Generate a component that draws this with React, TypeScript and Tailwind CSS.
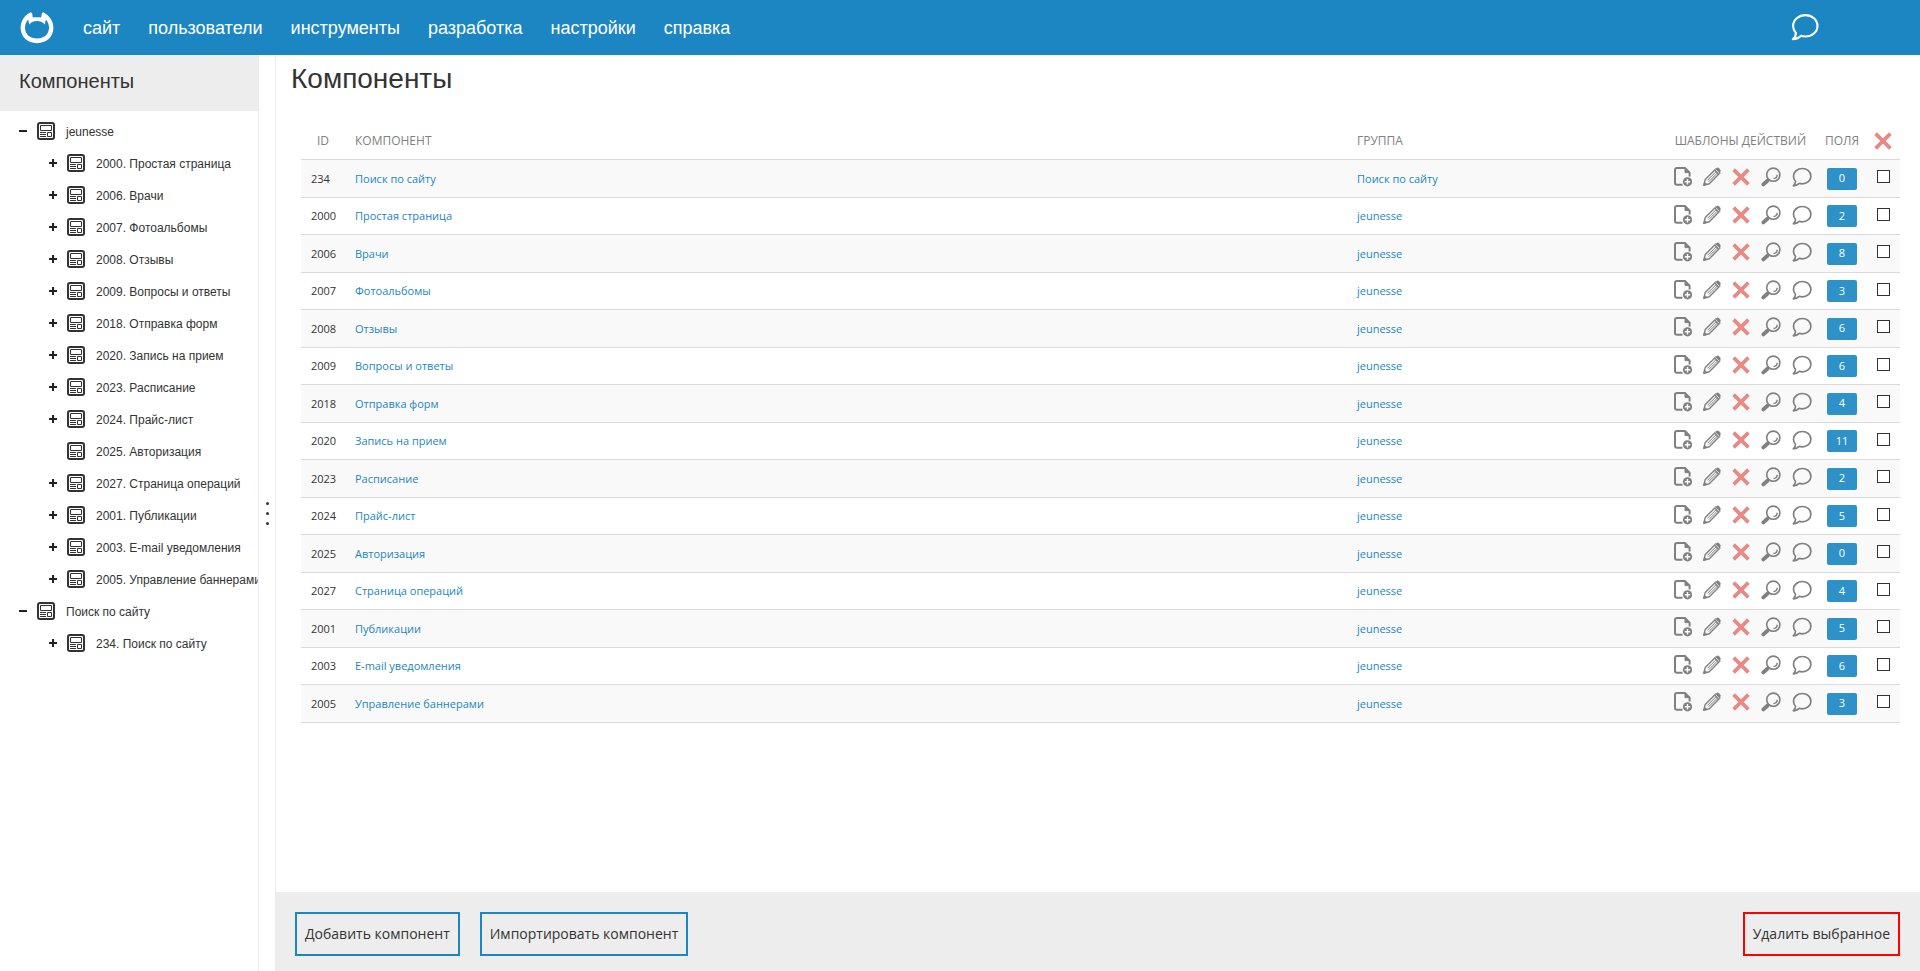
import React, { useState } from "react";

type TreeNode = { label: string; children?: TreeNode[]; leaf?: boolean };

type Component = { id: number; name: string; group: string; fields: number };

const components: Component[] = [
  { id: 234, name: "Поиск по сайту", group: "Поиск по сайту", fields: 0 },
  { id: 2000, name: "Простая страница", group: "jeunesse", fields: 2 },
  { id: 2006, name: "Врачи", group: "jeunesse", fields: 8 },
  { id: 2007, name: "Фотоальбомы", group: "jeunesse", fields: 3 },
  { id: 2008, name: "Отзывы", group: "jeunesse", fields: 6 },
  { id: 2009, name: "Вопросы и ответы", group: "jeunesse", fields: 6 },
  { id: 2018, name: "Отправка форм", group: "jeunesse", fields: 4 },
  { id: 2020, name: "Запись на прием", group: "jeunesse", fields: 11 },
  { id: 2023, name: "Расписание", group: "jeunesse", fields: 2 },
  { id: 2024, name: "Прайс-лист", group: "jeunesse", fields: 5 },
  { id: 2025, name: "Авторизация", group: "jeunesse", fields: 0 },
  { id: 2027, name: "Страница операций", group: "jeunesse", fields: 4 },
  { id: 2001, name: "Публикации", group: "jeunesse", fields: 5 },
  { id: 2003, name: "E-mail уведомления", group: "jeunesse", fields: 6 },
  { id: 2005, name: "Управление баннерами", group: "jeunesse", fields: 3 },
];

const toNode = (c: Component): TreeNode => ({
  label: `${c.id}. ${c.name}`,
  leaf: c.id === 2025,
});

const tree: TreeNode[] = ["jeunesse", "Поиск по сайту"].map((group) => ({
  label: group,
  children: components.filter((c) => c.group === group).map(toNode),
}));

const menu = ["сайт", "пользователи", "инструменты", "разработка", "настройки", "справка"];

function Logo() {
  return (
    <svg viewBox="0 0 34 32" className="h-8 w-[34px]" fill="#fff">
      <path
        fillRule="evenodd"
        d="M10.200 .5Q11.800 0 12.200 1.800L12.800 5.600C15.400 5 18.600 5 21.200 5.600L21.800 1.800Q22.200 0 23.800 .5C28.800 3.200 33.400 8.800 33.400 15.800C33.400 25 26.200 31.200 17 31.200C7.800 31.200 .6 25 .6 15.800C.6 8.600 5.200 2.800 10.200 .5ZM17 9C13.900 9 11.600 9.800 9.200 12.600L8.200 7.600C6.200 10 5 12.500 5 15.800C5 22.400 10 26.600 17 26.600C24 26.600 29 22.400 29 15.800C29 12.500 27.800 10 25.800 7.600L24.800 12.600C22.400 9.800 20.100 9 17 9Z"
      />
    </svg>
  );
}

function BubbleIcon({ className }: { className: string }) {
  return (
    <svg viewBox="0 0 20 20" className={className} fill="none" stroke="currentColor" strokeLinejoin="round">
      <path d="M10.300 1.500C15 1.500 18.900 4.900 18.900 9.200C18.900 13.500 15 16.800 10.300 16.800C9.200 16.800 8.200 16.700 7.300 16.300C5.700 17.900 3.600 18.700 1.300 18.800C2.700 17.700 3.500 16.300 3.500 14.300C2.200 12.900 1.500 11.200 1.500 9.200C1.500 4.900 5.500 1.500 10.300 1.500Z" />
    </svg>
  );
}

function NodeIcon() {
  return (
    <svg viewBox="0 0 18 18" className="h-[18px] w-[18px] shrink-0" fill="none" stroke="#333">
      <rect x="1" y="1" width="16" height="16" rx="2" strokeWidth="2" />
      <path d="M3.500 3.500H14.500V8.500H3.500ZM10.500 10.500H14.500V14.500H10.500ZM3 10.500H9M3 12.500H9M3 14.500H9" />
    </svg>
  );
}

function PageAddIcon() {
  return (
    <svg viewBox="0 0 18 20" className="h-5 w-[18px]" fill="none" stroke="#808080">
      <path d="M8.500 17.800H3Q1 17.800 1 15.800V3Q1 1 3 1H11L15.600 5.600V9.500" strokeWidth="2" />
      <path d="M11 1V5.600H15.600Z" fill="#808080" />
      <circle cx="13.500" cy="14.800" r="4.600" fill="#808080" stroke="none" />
      <path d="M10.800 14.800H16.200M13.500 12.100V17.500" stroke="#fff" strokeWidth="1.400" />
    </svg>
  );
}

function PencilIcon() {
  return (
    <svg viewBox="0 0 18 20" className="h-5 w-[18px]" fill="none" stroke="#808080" strokeLinejoin="round">
      <path d="M.8 18.200L2.200 12.600L12.800 2L16.900 6.100L6.300 16.700Z" strokeWidth="1.400" />
      <path d="M4.500 13.300L13 4.800M5.800 14.600L14.300 6.100" strokeWidth="1" />
      <path d="M11.300 3.500L14 .8Q15 .2 16 1.200L17.500 2.900Q18 4 17.300 4.800L14.800 7.500Z" fill="#808080" stroke="none" />
      <path d="M12.500 2.500L16.300 6.300" stroke="#f4f4f4" strokeWidth=".8" />
      <path d="M.8 18.200L1.600 15.200L3.800 17.400Z" fill="#808080" />
    </svg>
  );
}

function CrossIcon() {
  return (
    <svg viewBox="0 0 18 18" className="h-[18px] w-[18px]" stroke="#e68a83" strokeWidth="3.700">
      <path d="M1.600 1.600L16.400 16.400M16.400 1.600L1.600 16.400" />
    </svg>
  );
}

function SearchIcon() {
  return (
    <svg viewBox="0 0 20 20" className="h-5 w-5" fill="none" stroke="#808080">
      <circle cx="12.300" cy="7.700" r="6.600" strokeWidth="1.600" />
      <path d="M12.500 11.600Q16 11.200 16.300 7.700" strokeWidth="1.500" />
      <path d="M7.800 12.200L6 13.800" strokeWidth="1.800" />
      <path d="M6.400 13.800L2.400 17.400" strokeWidth="3.900" strokeLinecap="round" />
    </svg>
  );
}

function Toggle({ open, onClick, label }: { open: boolean; onClick?: () => void; label: string }) {
  return (
    <button type="button" aria-label={label} aria-expanded={open} onClick={onClick} className="h-2 w-2 shrink-0">
      <svg viewBox="0 0 8 8" className="h-2 w-2" stroke="#222" strokeWidth="2">
        <path d={open ? "M0 4H8" : "M0 4H8M4 0V8"} />
      </svg>
    </button>
  );
}

function Branch({ node }: { node: TreeNode }) {
  const [open, setOpen] = useState(true);
  return (
    <li>
      <div className="flex h-8 items-center gap-[10px] pl-[19px]">
        <Toggle open={open} onClick={() => setOpen(!open)} label={node.label} />
        <NodeIcon />
        <a href="#" className="pt-px pl-px">{node.label}</a>
      </div>
      {open && (
        <ul>
          {node.children?.map((child) => (
            <li key={child.label} className="flex h-8 items-center gap-[10px] pl-[49px]">
              {child.leaf ? <span className="w-2 shrink-0" /> : <Toggle open={false} label={child.label} />}
              <NodeIcon />
              <a href="#" className="pt-px pl-px">{child.label}</a>
            </li>
          ))}
        </ul>
      )}
    </li>
  );
}

function Actions() {
  return (
    <div className="flex items-center justify-between pb-[2px] text-[#808080]">
      <button type="button" aria-label="Добавить"><PageAddIcon /></button>
      <button type="button" aria-label="Изменить"><PencilIcon /></button>
      <button type="button" aria-label="Удалить"><CrossIcon /></button>
      <button type="button" aria-label="Поиск"><SearchIcon /></button>
      <button type="button" aria-label="Подписка"><BubbleIcon className="h-5 w-5 stroke-[1.7]" /></button>
    </div>
  );
}

export default function App() {
  return (
    <div className="flex h-screen flex-col bg-white font-['Liberation_Sans',sans-serif] text-[#333]">
      <header className="flex h-[55px] shrink-0 items-center bg-[#1c86c2] pr-[101px] pl-5 text-white">
        <a href="#" aria-label="Главная"><Logo /></a>
        <nav className="ml-[15px] flex text-lg">
          {menu.map((item) => (
            <a key={item} href="#" className="px-[14px]">{item}</a>
          ))}
        </nav>
        <button type="button" aria-label="Сообщения" className="ml-auto pb-[2px]">
          <BubbleIcon className="h-7 w-7 stroke-[1.5]" />
        </button>
      </header>

      <div className="flex min-h-0 flex-1">
        <aside className="w-[259px] shrink-0 overflow-hidden border-r border-[#ededed]">
          <h2 className="flex h-14 items-center bg-[#ededed] pb-1 pl-[19px] text-xl">Компоненты</h2>
          <ul className="pt-1 text-xs whitespace-nowrap">
            {tree.map((node) => <Branch key={node.label} node={node} />)}
          </ul>
        </aside>

        <div className="flex w-[17px] shrink-0 flex-col items-center justify-center gap-[7px] border-r border-[#ededed]">
          <span className="h-[3px] w-[3px] rounded-full bg-[#333]" />
          <span className="h-[3px] w-[3px] rounded-full bg-[#333]" />
          <span className="h-[3px] w-[3px] rounded-full bg-[#333]" />
        </div>

        <main className="flex min-w-0 flex-1 flex-col">
          <h1 className="pt-1 pl-[15px] text-[28px] leading-10">Компоненты</h1>

          <div className="flex-1 overflow-auto pt-5 pr-5 pl-[25px] font-['Open_Sans',sans-serif] text-[11px]">
            <table className="w-full table-fixed border-collapse text-left">
              <thead>
                <tr className="h-10 text-xs text-[#808080] [&>th]:pt-1 [&>th]:font-normal">
                  <th className="w-11 text-center">ID</th>
                  <th className="pl-[10px]">КОМПОНЕНТ</th>
                  <th className="w-[317px] pl-[10px]">ГРУППА</th>
                  <th className="w-[154px] pr-3 text-right whitespace-nowrap">ШАБЛОНЫ ДЕЙСТВИЙ</th>
                  <th className="w-12 text-center">ПОЛЯ</th>
                  <th className="w-[34px]"><div className="flex justify-center"><CrossIcon /></div></th>
                </tr>
              </thead>
              <tbody>
                {components.map((c) => (
                  <tr key={c.id} className="border-y border-[#d9d9d9] odd:h-[38px] odd:bg-[#f9f9f9] even:h-[37px]">
                    <td className="pt-[2px] pl-[10px]">{c.id}</td>
                    <td className="pt-[2px] pl-[10px]"><a href="#" className="text-[#1c86c2]">{c.name}</a></td>
                    <td className="pt-[2px] pl-[10px]"><a href="#" className="text-[#1c86c2]">{c.group}</a></td>
                    <td className="pr-[6px] pl-[10px]"><Actions /></td>
                    <td className="pt-px">
                      <a href="#" className="mx-auto flex h-[22px] w-[30px] items-center justify-center rounded-xs bg-[#2e92c9] text-white">
                        {c.fields}
                      </a>
                    </td>
                    <td>
                      <input
                        type="checkbox"
                        aria-label={c.name}
                        className="mx-auto mb-[3px] block h-[13px] w-[13px] appearance-none border border-[#333] bg-white checked:bg-[#1c86c2]"
                      />
                    </td>
                  </tr>
                ))}
              </tbody>
            </table>
          </div>

          <footer className="flex h-[79px] shrink-0 items-start gap-5 bg-[#ededed] pt-5 pr-5 pl-[19px] font-['Open_Sans',sans-serif] text-sm">
            <button type="button" className="h-11 border-2 border-[#1c86c2] px-2">Добавить компонент</button>
            <button type="button" className="h-11 border-2 border-[#1c86c2] px-2">Импортировать компонент</button>
            <button type="button" className="ml-auto h-11 border-2 border-[#f00] px-2">Удалить выбранное</button>
          </footer>
        </main>
      </div>
    </div>
  );
}
